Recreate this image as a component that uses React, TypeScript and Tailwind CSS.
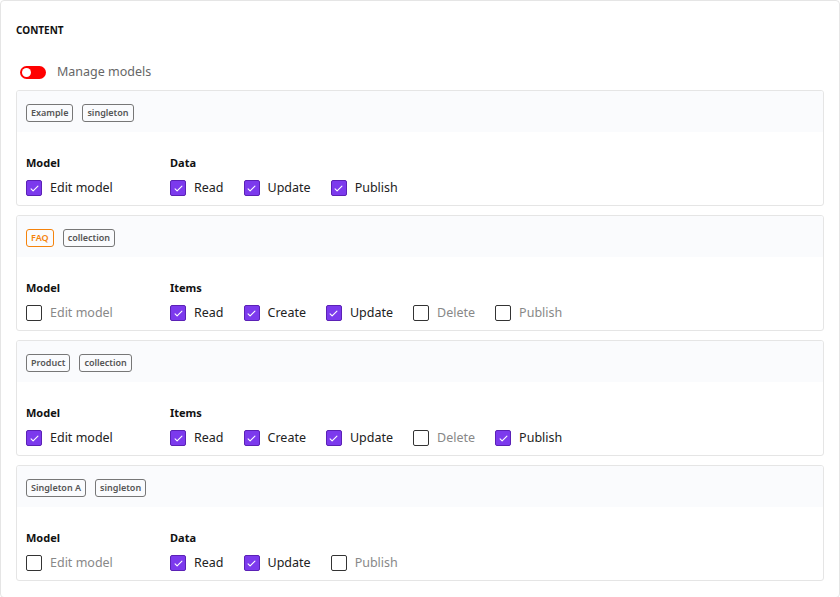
import React from 'react';

type Perm = { label: string; checked: boolean };

type ModelCard = {
  name: string;
  kind: 'singleton' | 'collection';
  highlight?: boolean;
  editModel: boolean;
  group: string;
  perms: Perm[];
};

const cards: ModelCard[] = [
  {
    name: 'Example',
    kind: 'singleton',
    editModel: true,
    group: 'Data',
    perms: [
      { label: 'Read', checked: true },
      { label: 'Update', checked: true },
      { label: 'Publish', checked: true },
    ],
  },
  {
    name: 'FAQ',
    kind: 'collection',
    highlight: true,
    editModel: false,
    group: 'Items',
    perms: [
      { label: 'Read', checked: true },
      { label: 'Create', checked: true },
      { label: 'Update', checked: true },
      { label: 'Delete', checked: false },
      { label: 'Publish', checked: false },
    ],
  },
  {
    name: 'Product',
    kind: 'collection',
    editModel: true,
    group: 'Items',
    perms: [
      { label: 'Read', checked: true },
      { label: 'Create', checked: true },
      { label: 'Update', checked: true },
      { label: 'Delete', checked: false },
      { label: 'Publish', checked: true },
    ],
  },
  {
    name: 'Singleton A',
    kind: 'singleton',
    editModel: false,
    group: 'Data',
    perms: [
      { label: 'Read', checked: true },
      { label: 'Update', checked: true },
      { label: 'Publish', checked: false },
    ],
  },
];

const Checkbox: React.FC<Perm> = ({ label, checked }) => (
  <label className="flex items-center gap-2 h-4">
    {checked ? (
      <span className="w-4 h-4 rounded-[2px] bg-[#7c3aed] border border-[#5b21b6] flex items-center justify-center">
        <svg viewBox="0 0 16 16" className="w-[11px] h-[11px]" fill="none">
          <path d="M3 8.5l3 3 7-7" stroke="#fff" strokeWidth="1.6" strokeLinecap="round" strokeLinejoin="round" />
        </svg>
      </span>
    ) : (
      <span className="w-4 h-4 rounded-[2px] bg-white border border-[#333]" />
    )}
    <span className={`text-[12.5px] leading-4 ${checked ? 'text-[#222]' : 'text-[#888]'}`}>{label}</span>
  </label>
);

const Tag: React.FC<{ text: string; orange?: boolean }> = ({ text, orange }) => (
  <span
    className={`h-[18px] px-[4px] flex items-center rounded-[3px] border text-[9px] font-semibold ${
      orange ? 'border-[#f5830c] text-[#f5830c]' : 'border-[#777] text-[#555]'
    }`}
  >
    {text}
  </span>
);

export default function App() {
  return (
    <div className="min-h-screen bg-white" style={{ fontFamily: '"Noto Sans", "Open Sans", sans-serif' }}>
      <div className="border border-[#e5e5e5] rounded-[4px] px-[15px] pt-[22px] pb-4">
        <div className="text-[10px] leading-[14px] font-bold text-[#111]">CONTENT</div>

        <div className="mt-[26px] h-[18px] flex items-center">
          <span className="ml-1 w-[26px] h-[13px] rounded-full bg-[#ff0000] flex items-center px-[2px]">
            <span className="w-[9px] h-[9px] rounded-full bg-white" />
          </span>
          <span className="ml-[11px] text-[12.5px] text-[#666]">Manage models</span>
        </div>

        <div className="mt-[9px] flex flex-col gap-[9px]">
          {cards.map((c) => (
            <div key={c.name} className="border border-[#e5e5e5] rounded-[3px] overflow-hidden">
              <div className="h-[41px] bg-[#fafbfd] px-[9px] pt-[13px] flex items-start gap-[9px]">
                <Tag text={c.name} orange={c.highlight} />
                <Tag text={c.kind} />
              </div>
              <div className="px-[9px] pt-[24px] pb-[9px] flex">
                <div className="w-[144px]">
                  <div className="text-[11px] leading-[14px] font-bold text-[#111]">Model</div>
                  <div className="mt-[10px]">
                    <Checkbox label="Edit model" checked={c.editModel} />
                  </div>
                </div>
                <div>
                  <div className="text-[11px] leading-[14px] font-bold text-[#111]">{c.group}</div>
                  <div className="mt-[10px] flex gap-5">
                    {c.perms.map((p) => (
                      <Checkbox key={p.label} {...p} />
                    ))}
                  </div>
                </div>
              </div>
            </div>
          ))}
        </div>
      </div>
    </div>
  );
}
